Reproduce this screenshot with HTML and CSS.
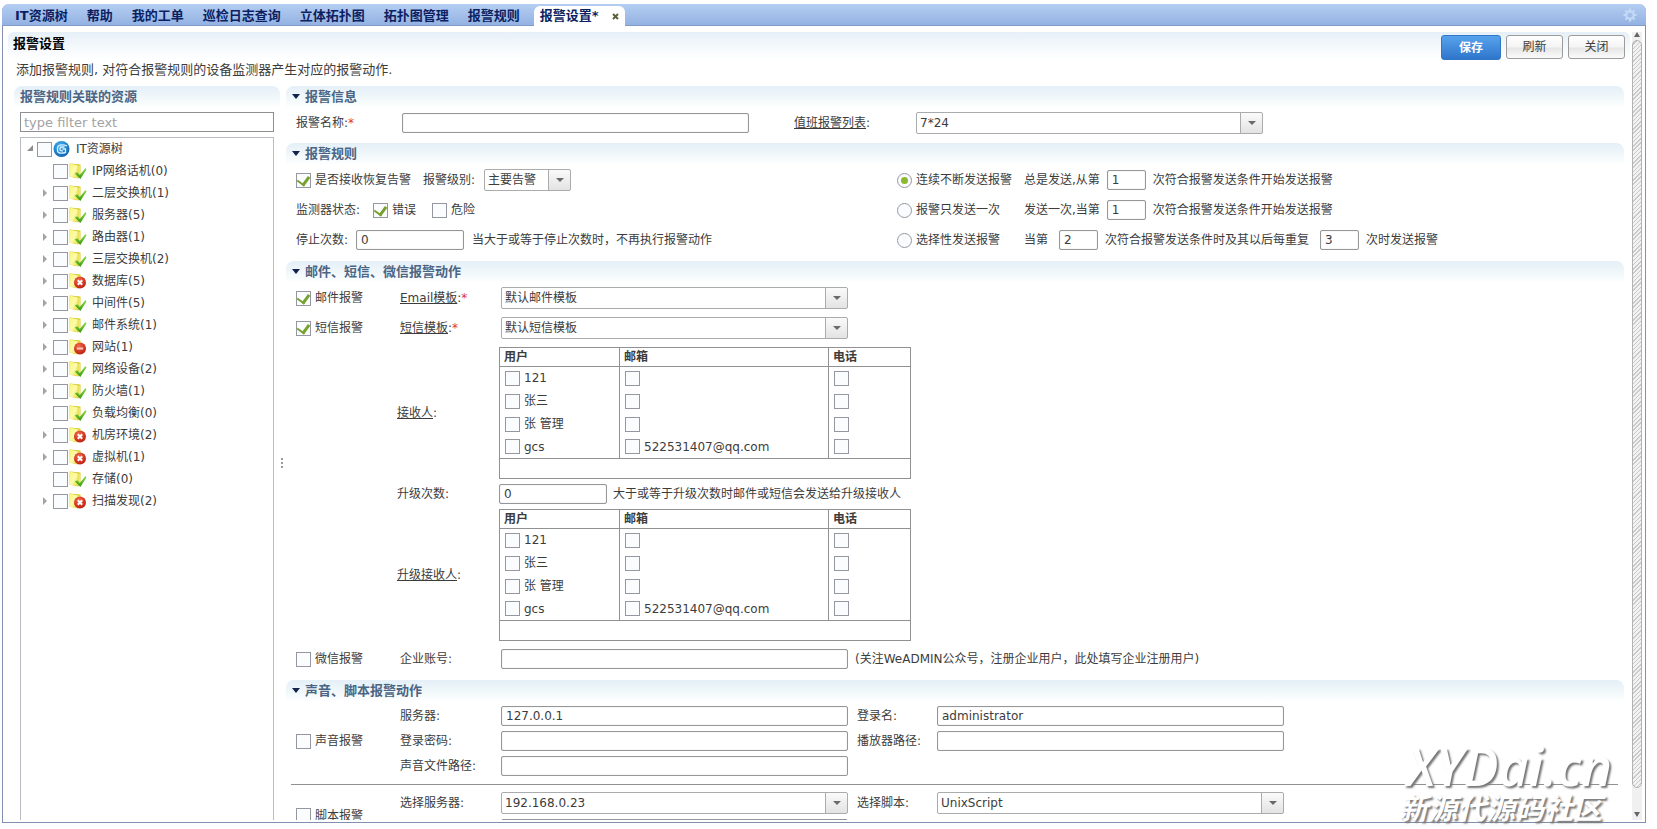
FILE: index.html
```html
<!DOCTYPE html>
<html lang="zh-CN">
<head>
<meta charset="utf-8">
<title>报警设置</title>
<link rel="stylesheet" href="styles.css">
</head>
<body>
<svg class="defs" aria-hidden="true">
  <defs>
    <linearGradient id="g-folder" x1="0" x2="1" y1="0" y2="1"><stop offset="0" stop-color="#f7f56c"/><stop offset=".5" stop-color="#fdfbb0"/><stop offset="1" stop-color="#e6dc3c"/></linearGradient>
    <radialGradient id="g-red" cx=".4" cy=".3" r=".8"><stop offset="0" stop-color="#f4694b"/><stop offset="1" stop-color="#b81407"/></radialGradient>
    <radialGradient id="g-blue" cx=".4" cy=".3" r=".8"><stop offset="0" stop-color="#3fb2f2"/><stop offset="1" stop-color="#0a5cab"/></radialGradient>
    <linearGradient id="g-green" x1="0" x2="0" y1="0" y2="1"><stop offset="0" stop-color="#8be04c"/><stop offset="1" stop-color="#35960c"/></linearGradient>
    <symbol id="folder" viewBox="0 0 18 18">
      <path d="M.5 1.500 11.500 2.500V13L9 16.500.5 14.500Z" fill="#d8cb2a"/>
      <path d="M.5 1.500 8.800 3.500V16.300L.5 14.500Z" fill="url(#g-folder)"/>
      <path d="M9.300 4 11 3.200V12.500L9.300 15Z" fill="#efe96a"/>
    </symbol>
    <symbol id="ok" viewBox="0 0 18 18">
      <use href="#folder" width="18" height="18"/>
      <path d="M5.800 11.500 8.300 10.300 10.800 13 16.500 6 17.500 7.500 11.300 17Z" fill="url(#g-green)"/>
    </symbol>
    <symbol id="err" viewBox="0 0 18 18">
      <use href="#folder" width="18" height="18"/>
      <circle cx="11" cy="10.500" r="6" fill="url(#g-red)"/>
      <path d="M8.800 8.300 13.200 12.700M13.200 8.300 8.800 12.700" stroke="#fff" stroke-width="2"/>
    </symbol>
    <symbol id="stop" viewBox="0 0 18 18">
      <use href="#folder" width="18" height="18"/>
      <circle cx="11" cy="10.500" r="6" fill="url(#g-red)"/>
      <path d="M7.800 10.500H14.200" stroke="#ffc9bd" stroke-width="2"/>
    </symbol>
    <symbol id="root" viewBox="0 0 18 18">
      <circle cx="8.500" cy="9" r="8" fill="url(#g-blue)"/>
      <path d="M14 5.800C10.500 4.500 5 4 4.500 8V10.500C4.500 13.500 8 13.500 12.500 12.500V9H9.500M11.500 7H8.500C7 7 7 8 7 9.500 7 10.800 8 11 10 10.800" fill="none" stroke="#d6efff" stroke-width="1.300"/>
    </symbol>
  </defs>
</svg>
<div class="frame">
  <nav class="tabs">
    <a class="tab" href="#">IT资源树</a>
    <a class="tab" href="#">帮助</a>
    <a class="tab" href="#">我的工单</a>
    <a class="tab" href="#">巡检日志查询</a>
    <a class="tab" href="#">立体拓扑图</a>
    <a class="tab" href="#">拓扑图管理</a>
    <a class="tab" href="#">报警规则</a>
    <div class="tab tab-active"><a href="#">报警设置*</a><button class="tab-close" type="button" aria-label="关闭标签"><svg viewBox="0 0 7 7"><path d="M1 1 6 6M6 1 1 6"/></svg></button></div>
    <button class="gear" type="button" aria-label="设置"><svg viewBox="0 0 14 14"><circle cx="7" cy="7" r="3.700" fill="none" stroke-width="2.200"/><path d="M7 .5V3M7 11V13.500M.5 7H3M11 7H13.500M2.400 2.400 4.200 4.200M9.800 9.800 11.600 11.600M11.600 2.400 9.800 4.200M4.200 9.800 2.400 11.600" stroke-width="2"/></svg></button>
  </nav>
  <div class="view">
    <main class="page">
      <header class="titlebar">
        <h1>报警设置</h1>
        <button class="btn btn-primary" type="button">保存</button>
        <button class="btn" type="button">刷新</button>
        <button class="btn" type="button">关闭</button>
      </header>
      <p class="desc">添加报警规则,&nbsp;对符合报警规则的设备监测器产生对应的报警动作.</p>
      <div class="work">
        <aside class="side">
          <h2 class="band side-head">报警规则关联的资源</h2>
          <input class="filter" type="text" placeholder="type filter text" aria-label="type filter text">
          <ul class="tree">
            <li class="node root"><i class="twisty open"></i><input type="checkbox" id="t0"><svg><use href="#root"/></svg><label for="t0">IT资源树</label></li>
            <li class="node"><i class="twisty none"></i><input type="checkbox" id="t1"><svg><use href="#ok"/></svg><label for="t1">IP网络话机(0)</label></li>
            <li class="node"><i class="twisty"></i><input type="checkbox" id="t2"><svg><use href="#ok"/></svg><label for="t2">二层交换机(1)</label></li>
            <li class="node"><i class="twisty"></i><input type="checkbox" id="t3"><svg><use href="#ok"/></svg><label for="t3">服务器(5)</label></li>
            <li class="node"><i class="twisty"></i><input type="checkbox" id="t4"><svg><use href="#ok"/></svg><label for="t4">路由器(1)</label></li>
            <li class="node"><i class="twisty"></i><input type="checkbox" id="t5"><svg><use href="#ok"/></svg><label for="t5">三层交换机(2)</label></li>
            <li class="node"><i class="twisty"></i><input type="checkbox" id="t6"><svg><use href="#err"/></svg><label for="t6">数据库(5)</label></li>
            <li class="node"><i class="twisty"></i><input type="checkbox" id="t7"><svg><use href="#ok"/></svg><label for="t7">中间件(5)</label></li>
            <li class="node"><i class="twisty"></i><input type="checkbox" id="t8"><svg><use href="#ok"/></svg><label for="t8">邮件系统(1)</label></li>
            <li class="node"><i class="twisty"></i><input type="checkbox" id="t9"><svg><use href="#stop"/></svg><label for="t9">网站(1)</label></li>
            <li class="node"><i class="twisty"></i><input type="checkbox" id="t10"><svg><use href="#ok"/></svg><label for="t10">网络设备(2)</label></li>
            <li class="node"><i class="twisty"></i><input type="checkbox" id="t11"><svg><use href="#ok"/></svg><label for="t11">防火墙(1)</label></li>
            <li class="node"><i class="twisty none"></i><input type="checkbox" id="t12"><svg><use href="#ok"/></svg><label for="t12">负载均衡(0)</label></li>
            <li class="node"><i class="twisty"></i><input type="checkbox" id="t13"><svg><use href="#err"/></svg><label for="t13">机房环境(2)</label></li>
            <li class="node"><i class="twisty"></i><input type="checkbox" id="t14"><svg><use href="#err"/></svg><label for="t14">虚拟机(1)</label></li>
            <li class="node"><i class="twisty none"></i><input type="checkbox" id="t15"><svg><use href="#ok"/></svg><label for="t15">存储(0)</label></li>
            <li class="node"><i class="twisty"></i><input type="checkbox" id="t16"><svg><use href="#err"/></svg><label for="t16">扫描发现(2)</label></li>
          </ul>
        </aside>
        <div class="splitter"><i></i><i></i><i></i></div>
        <form class="form">
          <section>
            <h2 class="band">报警信息</h2>
            <div class="info">
              <label for="name">报警名称:<b class="req">*</b></label>
              <input class="text" id="name" type="text">
              <label for="duty"><u>值班报警列表</u>:</label>
              <span class="combo"><select id="duty"><option>7*24</option></select></span>
            </div>
          </section>
          <section>
            <h2 class="band">报警规则</h2>
            <div class="rules">
              <div class="row gap-wide">
                <label class="check"><input type="checkbox" checked>是否接收恢复告警</label>
                <span class="row"><label for="level">报警级别:</label><span class="combo combo-small"><select id="level"><option>主要告警</option></select></span></span>
              </div>
              <div class="cond">
                <label class="check"><input type="radio" name="mode" checked>连续不断发送报警</label>
                <span class="row">总是发送,从第<input class="text num" type="text" value="1" aria-label="总是发送,从第">次符合报警发送条件开始发送报警</span>
              </div>
              <div class="row status">
                <span class="row">监测器状态:<label class="check"><input type="checkbox" checked>错误</label></span>
                <label class="check"><input type="checkbox">危险</label>
              </div>
              <div class="cond">
                <label class="check"><input type="radio" name="mode">报警只发送一次</label>
                <span class="row">发送一次,当第<input class="text num" type="text" value="1" aria-label="发送一次,当第">次符合报警发送条件开始发送报警</span>
              </div>
              <div class="row stopline"><label for="stopn">停止次数:</label><input class="text count" id="stopn" type="text" value="0">当大于或等于停止次数时，不再执行报警动作</div>
              <div class="cond">
                <label class="check"><input type="radio" name="mode">选择性发送报警</label>
                <span class="row sel">当第<input class="text num" type="text" value="2" aria-label="当第">次符合报警发送条件时及其以后每重复<input class="text num" type="text" value="3" aria-label="每重复">次时发送报警</span>
              </div>
            </div>
          </section>
          <section>
            <h2 class="band">邮件、短信、微信报警动作</h2>
            <div class="mail">
              <label class="check"><input type="checkbox" checked>邮件报警</label>
              <label for="mailtpl"><u>Email模板</u>:<b class="req">*</b></label>
              <span class="combo"><select id="mailtpl"><option>默认邮件模板</option></select></span>
              <label class="check"><input type="checkbox" checked>短信报警</label>
              <label for="smstpl"><u>短信模板</u>:<b class="req">*</b></label>
              <span class="combo"><select id="smstpl"><option>默认短信模板</option></select></span>
            </div>
            <div class="recv">
              <span><u>接收人</u>:</span>
              <table class="users">
                <thead><tr><th class="c-user">用户</th><th class="c-mail">邮箱</th><th>电话</th></tr></thead>
                <tbody>
                  <tr><td><label class="check"><input type="checkbox">121</label></td><td><input type="checkbox" aria-label="121 邮箱"></td><td><input type="checkbox" aria-label="121 电话"></td></tr>
                  <tr><td><label class="check"><input type="checkbox">张三</label></td><td><input type="checkbox" aria-label="张三 邮箱"></td><td><input type="checkbox" aria-label="张三 电话"></td></tr>
                  <tr><td><label class="check"><input type="checkbox">张 管理</label></td><td><input type="checkbox" aria-label="张 管理 邮箱"></td><td><input type="checkbox" aria-label="张 管理 电话"></td></tr>
                  <tr><td><label class="check"><input type="checkbox">gcs</label></td><td><label class="check"><input type="checkbox">522531407@qq.com</label></td><td><input type="checkbox" aria-label="gcs 电话"></td></tr>
                </tbody>
                <tfoot><tr><td colspan="3"></td></tr></tfoot>
              </table>
              <label for="upn">升级次数:</label>
              <span class="row tight"><input class="text count" id="upn" type="text" value="0">大于或等于升级次数时邮件或短信会发送给升级接收人</span>
              <span><u>升级接收人</u>:</span>
              <table class="users">
                <thead><tr><th class="c-user">用户</th><th class="c-mail">邮箱</th><th>电话</th></tr></thead>
                <tbody>
                  <tr><td><label class="check"><input type="checkbox">121</label></td><td><input type="checkbox" aria-label="121 邮箱"></td><td><input type="checkbox" aria-label="121 电话"></td></tr>
                  <tr><td><label class="check"><input type="checkbox">张三</label></td><td><input type="checkbox" aria-label="张三 邮箱"></td><td><input type="checkbox" aria-label="张三 电话"></td></tr>
                  <tr><td><label class="check"><input type="checkbox">张 管理</label></td><td><input type="checkbox" aria-label="张 管理 邮箱"></td><td><input type="checkbox" aria-label="张 管理 电话"></td></tr>
                  <tr><td><label class="check"><input type="checkbox">gcs</label></td><td><label class="check"><input type="checkbox">522531407@qq.com</label></td><td><input type="checkbox" aria-label="gcs 电话"></td></tr>
                </tbody>
                <tfoot><tr><td colspan="3"></td></tr></tfoot>
              </table>
            </div>
            <div class="wechat">
              <label class="check"><input type="checkbox">微信报警</label>
              <label for="corp">企业账号:</label>
              <span class="row"><input class="text" id="corp" type="text">(关注WeADMIN公众号，注册企业用户，此处填写企业注册用户)</span>
            </div>
          </section>
          <section>
            <h2 class="band">声音、脚本报警动作</h2>
            <div class="action">
              <label class="check span3"><input type="checkbox">声音报警</label>
              <label for="srv">服务器:</label><input class="text" id="srv" type="text" value="127.0.0.1">
              <label for="user">登录名:</label><input class="text" id="user" type="text" value="administrator">
              <label for="pwd">登录密码:</label><input class="text" id="pwd" type="password">
              <label for="player">播放器路径:</label><input class="text" id="player" type="text">
              <label for="sound">声音文件路径:</label><input class="text" id="sound" type="text">
            </div>
            <hr>
            <div class="action">
              <label class="check span2"><input type="checkbox">脚本报警</label>
              <label for="ssrv">选择服务器:</label><span class="combo"><select id="ssrv"><option>192.168.0.23</option></select></span>
              <label for="script">选择脚本:</label><span class="combo"><select id="script"><option>UnixScript</option></select></span>
              <span></span><input class="text" type="text" aria-label="脚本参数">
            </div>
          </section>
        </form>
      </div>
    </main>
    <div class="scroll"><i class="up"></i><div class="thumb"></div><i class="down"></i></div>
  </div>
</div>
<div class="mark"><span class="mark-name">XYDai.cn</span><span class="mark-sub">新源代源码社区</span></div>
</body>
</html>
```
FILE: styles.css
```css
* { box-sizing: border-box; }

body {
  margin: 0;
  padding: 4px 11px 6px 2px;
  height: 100vh;
  overflow: hidden;
  background: #fff;
  color: #3c3c3c;
  font: 12px/16px "DejaVu Sans", "Noto Sans CJK SC", sans-serif;
}

input, select, button { font: inherit; color: inherit; margin: 0; }
a { color: inherit; text-decoration: none; }
h1, h2, p, ul { margin: 0; padding: 0; }
.defs { position: absolute; width: 0; height: 0; }

/* window frame and tabs */
.frame {
  display: flex;
  flex-direction: column;
  height: 100%;
  border: 1px solid #8090ae;
  border-top: 0;
  border-radius: 7px 7px 0 0;
}
.tabs {
  display: flex;
  align-items: flex-end;
  flex: none;
  height: 22px;
  margin: 0 -1px;
  padding-left: 3px;
  border-bottom: 1px solid #7f9cc8;
  border-radius: 7px 7px 0 0;
  background: linear-gradient(#b4cef2, #94b2e2);
  color: #0c1f63;
  font-size: 13px;
  font-weight: bold;
}
.tab { padding: 0 9px 0 10px; line-height: 18px; white-space: nowrap; }
.tab-active {
  display: flex;
  align-items: center;
  gap: 13px;
  height: 20px;
  margin: 0 0 -1px 5px;
  padding: 0 6px;
  border-radius: 6px 6px 0 0;
  background: #fff;
}
.tab-close, .gear { padding: 0; border: 0; background: none; line-height: 0; }
.tab-close svg { width: 7px; height: 7px; stroke: #5b5f3a; stroke-width: 2; }
.gear { margin: 0 9px 3px auto; }
.gear svg { width: 14px; height: 14px; stroke: #c3d9f6; }

/* page */
.view { display: flex; flex: 1; min-height: 0; padding: 6px 3px 2px 5px; gap: 2px; }
.page { display: flex; flex-direction: column; flex: 1; min-width: 0; overflow: hidden; }
.titlebar {
  display: flex;
  flex: none;
  gap: 5px;
  height: 28px;
  padding: 3px 5px 0;
  border-radius: 6px 6px 0 0;
  background: linear-gradient(#e6eff8, #f6fafc 60%, #fff);
}
.titlebar h1 { flex: 1; color: #000; font-size: 13px; line-height: 18px; }
.btn {
  width: 57px;
  height: 24px;
  flex: none;
  padding: 0;
  border: 1px solid #9b9b9b;
  border-radius: 3px;
  background: linear-gradient(#fff, #f4f4f4 50%, #e6e6e6 55%, #fbfbfb);
}
.btn-primary {
  width: 60px;
  height: 25px;
  border-color: #2f76c6;
  background: linear-gradient(#57a2ec, #2f76cb);
  color: #fff;
  font-weight: bold;
}
.desc { flex: none; height: 26px; padding-left: 8px; font-size: 13px; line-height: 20px; }
.work {
  display: grid;
  grid-template-columns: 266px 6px 1fr;
  flex: 1;
  min-height: 0;
  padding: 0 6px;
}
.band {
  position: relative;
  height: 22px;
  padding-left: 19px;
  border-radius: 8px 8px 0 0;
  background: linear-gradient(#e4eff7, #f3f9fb 60%, #fff);
  color: #4b6585;
  font-size: 13px;
  line-height: 22px;
}
.band::before {
  content: "";
  position: absolute;
  left: 6px;
  top: 8px;
  border: 4px solid transparent;
  border-top: 5px solid #10234d;
  border-bottom: 0;
}
.side-head { padding-left: 6px; margin-bottom: 4px; }
.side-head::before { display: none; }

/* resource tree */
.side { display: flex; flex-direction: column; min-height: 0; }
.filter {
  height: 20px;
  margin: 0 6px 5px;
  padding: 0 3px;
  border: 1px solid #8d8f92;
  font-size: 13px;
}
.filter::placeholder { color: #a3a3a3; }
.tree {
  flex: 1;
  min-height: 0;
  margin: 0 6px;
  border: 1px solid #b9bdc3;
  border-bottom: 0;
  list-style: none;
  overflow: hidden;
}
.node { display: flex; align-items: center; height: 22px; padding-left: 22px; }
.node.root { padding-left: 6px; }
.node svg { width: 18px; height: 18px; flex: none; margin: 0 5px 0 1px; }
.node label { line-height: 20px; padding-bottom: 1px; }
.twisty { flex: none; width: 10px; height: 8px; }
.twisty::before {
  content: "";
  display: block;
  width: 0;
  border: 4px solid transparent;
  border-left-color: #a3a3a3;
  border-right: 0;
}
.twisty.open::before { border: 3px solid #8f8f8f; border-left-color: transparent; border-top-color: transparent; }
.twisty.none::before { display: none; }

.splitter { display: flex; flex-direction: column; align-items: flex-start; justify-content: center; gap: 2px; padding: 20px 0 0 1px; }
.splitter i { width: 2px; height: 2px; background: #9a9a9a; }

/* controls */
.text {
  width: 347px;
  height: 20px;
  padding: 0 4px;
  border: 1px solid #949698;
  border-radius: 2px;
  background: #fff;
  box-shadow: inset 0 0 1px #b5b5b5;
}
.text.num { width: 39px; }
.text.count { width: 108px; }
.combo { position: relative; display: block; width: 347px; height: 22px; }
.combo select {
  appearance: none;
  display: block;
  width: 100%;
  height: 100%;
  padding: 0 24px 0 3px;
  border: 1px solid #a9abad;
  border-radius: 2px;
  background: linear-gradient(#a9abad, #a9abad) right 21px top / 1px 100% no-repeat,
    linear-gradient(#fafafa, #e3e3e3) right / 21px 100% no-repeat, #fff;
}
.combo-small { width: 87px; }
.combo::after {
  content: "";
  position: absolute;
  right: 7px;
  top: 9px;
  border: 4px solid transparent;
  border-top-color: #6a6a6a;
  border-bottom: 0;
  pointer-events: none;
}
input[type="checkbox"], input[type="radio"] {
  appearance: none;
  display: grid;
  place-items: center;
  flex: none;
  width: 15px;
  height: 15px;
  border: 1px solid #9598a0;
  background: #fbfcfe;
}
input[type="radio"] { border-radius: 50%; }
input[type="radio"]:checked::after { content: ""; width: 7px; height: 7px; border-radius: 50%; background: #8bb82c; }
input[type="checkbox"]:checked::after {
  content: "";
  width: 6px;
  height: 9px;
  margin-bottom: 2px;
  border: solid #76a12e;
  border-width: 0 3px 2px 0;
  transform: rotate(36deg);
}
.check { display: flex; align-items: center; gap: 4px; white-space: nowrap; }
.req { color: #e0343c; font-weight: normal; }

/* form sections */
.form { min-width: 0; min-height: 0; overflow: hidden; }
.row { display: flex; align-items: center; gap: 7px; white-space: nowrap; }
.row.gap-wide { gap: 12px; }
.row.tight { gap: 6px; }
.info {
  display: grid;
  grid-template-columns: 106px 392px 122px 347px;
  align-items: center;
  padding: 4px 0 9px 10px;
}
.rules {
  display: grid;
  grid-template-columns: 601px 1fr;
  grid-auto-rows: 30px;
  padding: 0 0 6px 10px;
}
.rules .row.gap-wide .row { gap: 9px; }
.row.stopline { gap: 8px; }
.row.status { gap: 16px; }
.row.status .row { gap: 13px; }
.cond { display: grid; grid-template-columns: 127px 1fr; align-items: center; }
.sel .num { margin-left: 4px; }
.mail, .wechat {
  display: grid;
  grid-template-columns: 104px 101px 1fr;
  align-items: center;
  padding-left: 10px;
}
.mail { grid-auto-rows: 30px; padding-bottom: 4px; }
.recv {
  display: grid;
  grid-template-columns: 102px 1fr;
  align-items: center;
  row-gap: 5px;
  padding-left: 111px;
}
.wechat { padding-top: 8px; padding-bottom: 11px; }
.users { width: 412px; border-collapse: collapse; border: 1px solid #8f9193; table-layout: fixed; }
.users th, .users td { height: 23px; padding: 0 5px; border-left: 1px solid #8f9193; text-align: left; }
.users th { height: 19px; padding: 0 4px; line-height: 16px; }
.users thead, .users tfoot { border: 1px solid #8f9193; }
.users tfoot td { height: 20px; }
.c-user { width: 120px; }
.c-mail { width: 209px; }
.action {
  display: grid;
  grid-template-columns: 104px 101px 356px 80px 347px;
  align-items: center;
  row-gap: 5px;
  padding: 4px 0 8px 10px;
}
.span3 { grid-row: span 3; }
.span2 { grid-row: span 2; }
hr { margin: 0 6px 3px 5px; border: 0; border-top: 1px solid #8f9193; }

/* scrollbar */
.scroll { display: flex; flex-direction: column; align-items: center; flex: none; width: 10px; background: #f0f0f0; }
.up, .down { border: 3px solid transparent; }
.up { margin-bottom: 3px; border-top: 0; border-bottom: 5px solid #666; }
.down { margin: 24px 0 3px; border-bottom: 0; border-top: 5px solid #666; }
.thumb {
  flex: 1;
  width: 10px;
  border: 1px solid #b3b3b3;
  border-radius: 5px;
  background: repeating-linear-gradient(135deg, #f2f2f2 0 2px, #c9c9c9 2px 3px);
}

/* site watermark over the lower right corner */
.mark {
  position: absolute;
  right: 45px;
  bottom: 4px;
  display: flex;
  flex-direction: column;
  align-items: flex-end;
  color: #fff;
  white-space: nowrap;
  pointer-events: none;
  text-shadow: 2px 2px 2px #777;
}
.mark-name { font: italic 600 52px/42px "Open Sans", sans-serif; }
.mark-sub { padding-right: 10px; font: italic bold 29px/38px "Noto Sans CJK SC", sans-serif; }
```
